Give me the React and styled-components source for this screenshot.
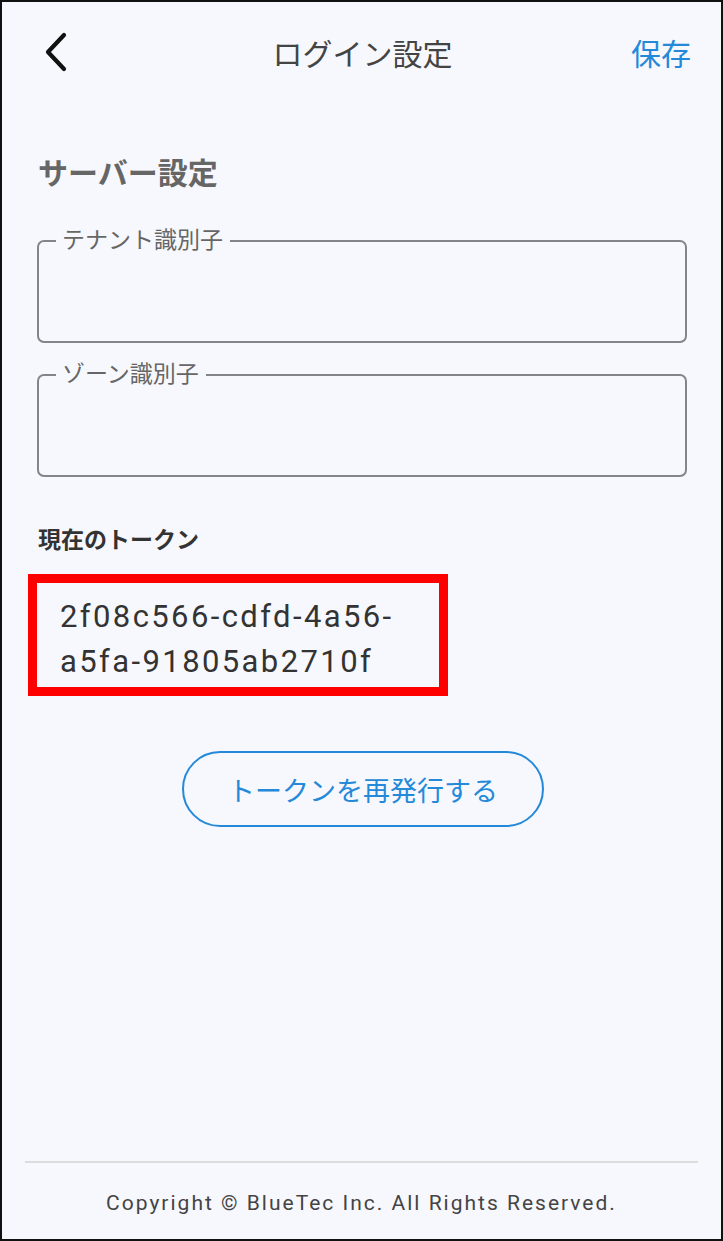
import React from 'react';
import styled, { createGlobalStyle } from 'styled-components';

const GlobalStyle = createGlobalStyle`
  html, body {
    margin: 0;
    padding: 0;
    background: #f7f8fd;
  }
  * {
    box-sizing: border-box;
  }
`;

const FONT = `Roboto, "Noto Sans CJK JP", "Noto Sans", sans-serif`;

// Page frame
const Screen = styled.div`
  width: 723px;
  height: 1241px;
  border: 2px solid #111;
  background: #f7f8fd;
  font-family: ${FONT};
  display: flex;
  flex-direction: column;
`;

const Header = styled.header`
  height: 100px;
  display: grid;
  grid-template-columns: 120px 1fr 120px;
  align-items: center;
  padding: 0 30px 0 40px;
`;

const BackButton = styled.button`
  width: 40px;
  height: 50px;
  padding: 0;
  border: none;
  background: none;
  display: flex;
  align-items: center;
  cursor: pointer;
`;

const Title = styled.h1`
  margin: 0 0 0 -8px;
  text-align: center;
  font-size: 30px;
  font-weight: 400;
  color: #444;
`;

const SaveButton = styled.button`
  justify-self: end;
  border: none;
  background: none;
  padding: 0;
  font-family: ${FONT};
  font-size: 30px;
  color: #2589d9;
  cursor: pointer;
`;

const Content = styled.main`
  flex: 1;
  padding: 47px 34px 0 35px;
  display: flex;
  flex-direction: column;
`;

const SectionTitle = styled.h2`
  margin: 0 0 33px 1px;
  font-size: 30px;
  font-weight: 700;
  color: #666;
`;

const Field = styled.fieldset`
  margin: 0 0 17px 0;
  padding: 0;
  height: 117px;
  border: 2px solid #838589;
  border-radius: 7px;
`;

const Legend = styled.legend`
  margin-left: 17px;
  padding: 0 7px 0 6px;
  font-size: 23px;
  line-height: 30px;
  color: #666;
`;

const TokenLabel = styled.div`
  margin: 27px 0 19px 1px;
  font-size: 23px;
  font-weight: 700;
  color: #333;
`;

const TokenBox = styled.div`
  width: 420px;
  margin-left: -9px;
  border: 9px solid #ff0000;
  padding: 11px 0 3px 23px;
  font-size: 31px;
  line-height: 45px;
  letter-spacing: 2.4px;
  color: #333;
`;

const ButtonRow = styled.div`
  display: flex;
  justify-content: center;
  margin-top: 55px;
`;

const OutlineButton = styled.button`
  width: 362px;
  height: 76px;
  border: 2px solid #2589d9;
  border-radius: 38px;
  background: transparent;
  font-family: ${FONT};
  font-size: 27px;
  color: #2589d9;
  margin-left: 2px;
  cursor: pointer;
`;

const Footer = styled.footer`
  margin: 0 23px;
  height: 78px;
  border-top: 2px solid #dcdcdc;
  display: flex;
  align-items: center;
  justify-content: center;
  padding-top: 4px;
  font-size: 21px;
  letter-spacing: 2px;
  color: #444;
`;

const Chevron = () => (
  <svg width="26" height="40" viewBox="0 0 26 40">
    <path d="M22 3 L6 20 L22 37" fill="none" stroke="#111" strokeWidth="4.2" strokeLinecap="round" strokeLinejoin="round" />
  </svg>
);

const App = () => {
  const token = ['2f08c566-cdfd-4a56-', 'a5fa-91805ab2710f'];

  return (
    <>
      <GlobalStyle />
      <Screen>
        <Header>
          <BackButton aria-label="戻る">
            <Chevron />
          </BackButton>
          <Title>ログイン設定</Title>
          <SaveButton>保存</SaveButton>
        </Header>

        <Content>
          <SectionTitle>サーバー設定</SectionTitle>
          <Field>
            <Legend>テナント識別子</Legend>
          </Field>
          <Field>
            <Legend>ゾーン識別子</Legend>
          </Field>

          <TokenLabel>現在のトークン</TokenLabel>
          <TokenBox>
            {token.map((line) => (
              <div key={line}>{line}</div>
            ))}
          </TokenBox>

          <ButtonRow>
            <OutlineButton>トークンを再発行する</OutlineButton>
          </ButtonRow>
        </Content>

        <Footer>Copyright © BlueTec Inc. All Rights Reserved.</Footer>
      </Screen>
    </>
  );
};

export default App;
